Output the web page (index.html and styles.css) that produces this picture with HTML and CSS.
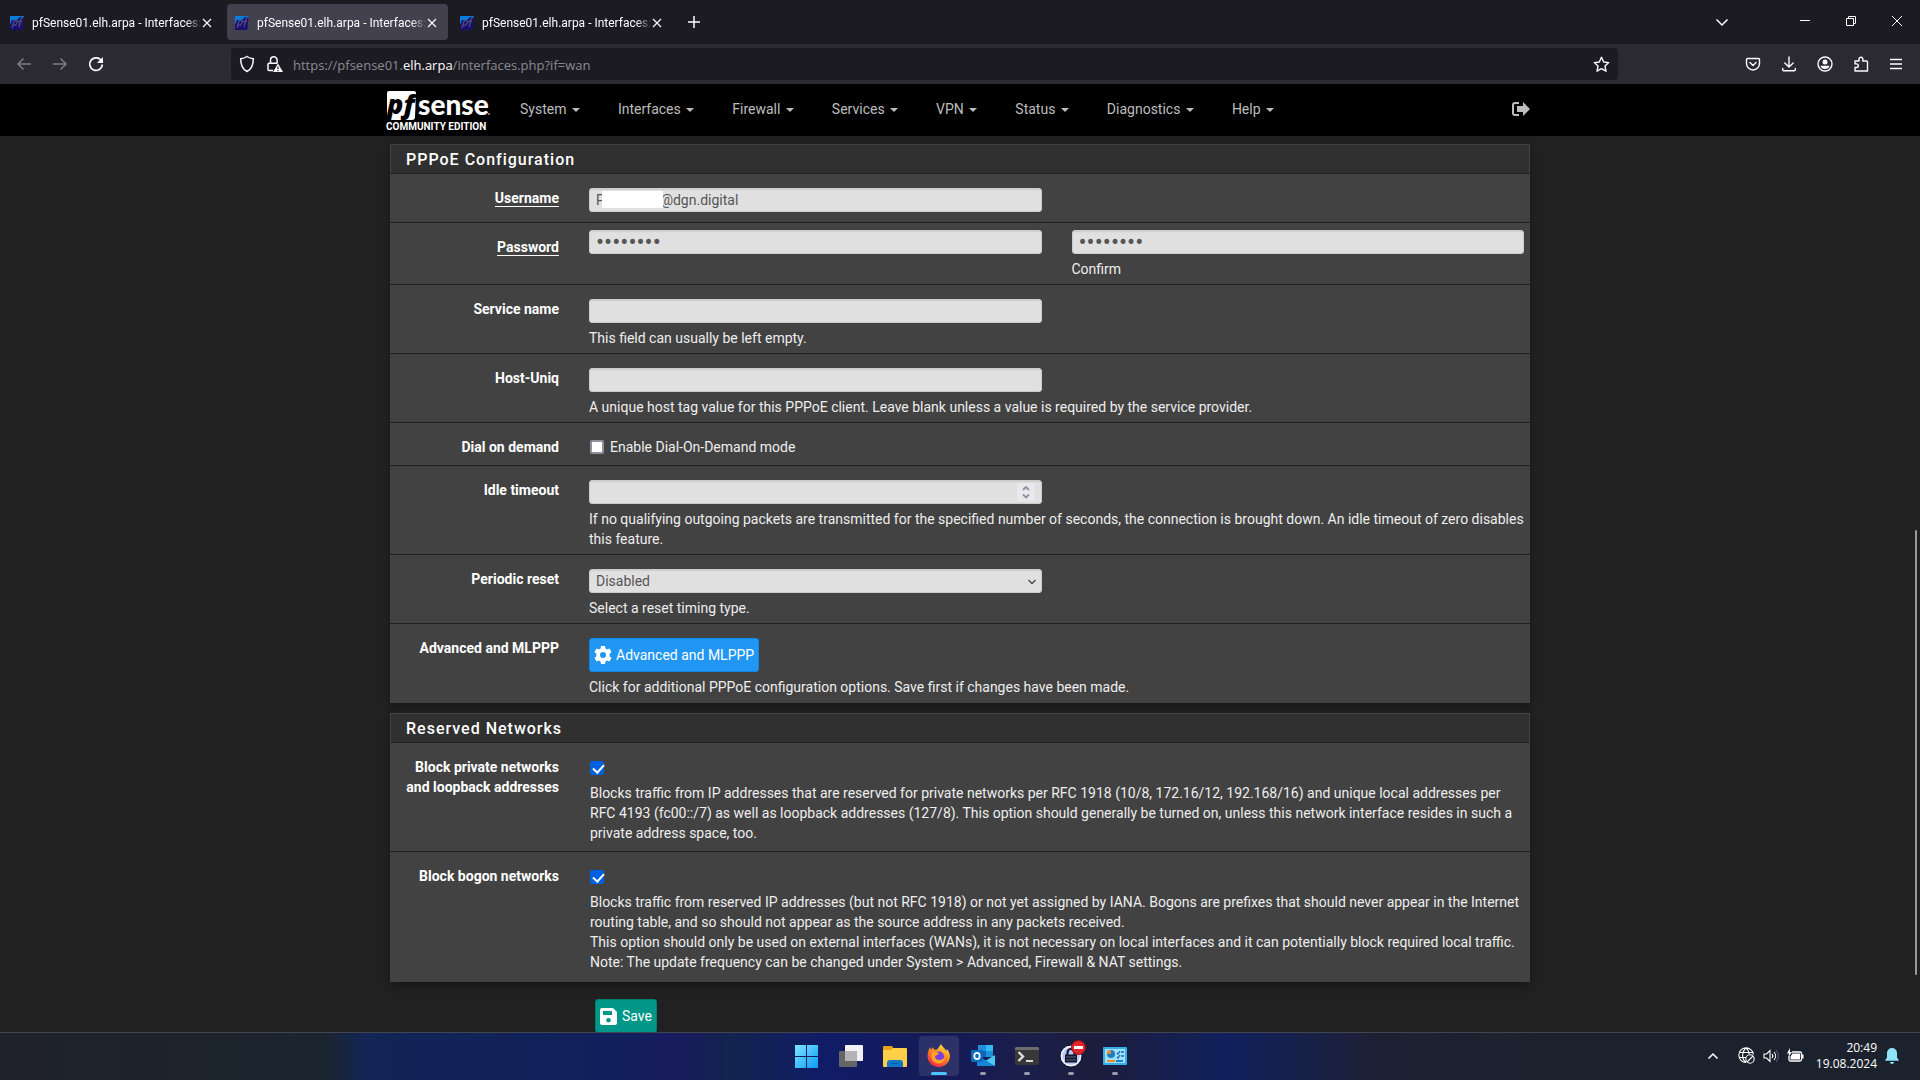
FILE: index.html
```html
<!DOCTYPE html>
<html lang="en">
<head>
    <meta charset="utf-8">
    <title>pfSense01.elh.arpa - Interfaces: WAN</title>
    <link rel="stylesheet" href="styles.css">
</head>
<body>
    <svg class="defs" aria-hidden="true">
        <symbol id="favicon" viewBox="0 0 14 14">
            <path fill="#0a7bd8" d="M0 0h14l-1 3h-3L8 9l-8 1z"/>
            <path fill="#1a0f6e" d="M0 9l2-5h5l3-3h3.500l-1 12-1 1H0z"/>
            <path fill="none" stroke="#4a4a7c" stroke-width="1.400" d="M2 12l2-7c3-1 4 0 3 2s-2 3-4 2M9 11l2-8c.4-1 1-1.500 2-1M8 5.500h4"/>
        </symbol>
        <symbol id="close" viewBox="0 0 10 10"><path fill="none" stroke="currentColor" stroke-width="1.200" d="M1 1l8 8M9 1L1 9"/></symbol>
    </svg>

    <!-- Browser chrome -->
    <div class="tab-bar">
        <div class="tab">
            <svg class="favicon"><use href="#favicon"/></svg>
            <span class="tab-title">pfSense01.elh.arpa - Interfaces: </span>
            <button class="tab-close" aria-label="Close tab"><svg><use href="#close"/></svg></button>
        </div>
        <div class="tab active">
            <svg class="favicon"><use href="#favicon"/></svg>
            <span class="tab-title">pfSense01.elh.arpa - Interfaces: </span>
            <button class="tab-close" aria-label="Close tab"><svg><use href="#close"/></svg></button>
        </div>
        <div class="tab">
            <svg class="favicon"><use href="#favicon"/></svg>
            <span class="tab-title">pfSense01.elh.arpa - Interfaces: </span>
            <button class="tab-close" aria-label="Close tab"><svg><use href="#close"/></svg></button>
        </div>
        <button class="new-tab" aria-label="New tab">
            <svg width="12" height="12" viewBox="0 0 12 12" fill="none" stroke="currentColor" stroke-width="1.500"><path d="M6 0v12M0 6h12"/></svg>
        </button>
        <div class="window-buttons">
            <button class="all-tabs" aria-label="List all tabs"><svg width="14" height="14" viewBox="0 0 14 14" fill="none" stroke="currentColor" stroke-width="1.500"><path d="M1.500 4.500L7 10l5.500-5.500"/></svg></button>
            <button aria-label="Minimize"><svg width="12" height="12" viewBox="0 0 12 12" fill="none" stroke="currentColor"><path d="M1 5.500h10"/></svg></button>
            <button aria-label="Restore"><svg width="12" height="12" viewBox="0 0 12 12" fill="none" stroke="currentColor"><path d="M1.500 3.500h7v7h-7zM3.500 3.500v-2h7v7h-2"/></svg></button>
            <button aria-label="Close"><svg width="12" height="12" viewBox="0 0 12 12" fill="none" stroke="currentColor"><path d="M1 1l10 10M11 1L1 11"/></svg></button>
        </div>
    </div>

    <div class="toolbar">
        <div class="nav-buttons">
            <button class="dim" aria-label="Back"><svg width="16" height="16" viewBox="0 0 16 16" fill="none" stroke="currentColor" stroke-width="1.500"><path d="M15 8H2M7.500 2.500L2 8l5.500 5.500"/></svg></button>
            <button class="dim" aria-label="Forward"><svg width="16" height="16" viewBox="0 0 16 16" fill="none" stroke="currentColor" stroke-width="1.500"><path d="M1 8h13M8.500 2.500L14 8l-5.500 5.500"/></svg></button>
            <button aria-label="Reload"><svg width="16" height="16" viewBox="0 0 16 16" fill="none" stroke="currentColor" stroke-width="1.700"><path d="M13.500 5A6.300 6.300 0 1 0 14.300 8.500"/><path fill="currentColor" stroke="none" d="M15 1v6H9z"/></svg></button>
        </div>
        <div class="url-bar">
            <svg width="16" height="18" viewBox="0 0 16 18" fill="none" stroke="currentColor" stroke-width="1.500"><path d="M8 1.500c2 1.400 4 2 6.300 2.200 0 6-1.300 10.300-6.300 12.800C3 14 1.700 9.700 1.700 3.700 4 3.500 6 2.900 8 1.500z"/></svg>
            <svg width="18" height="18" viewBox="0 0 18 18"><path fill="none" stroke="currentColor" stroke-width="1.500" d="M5.500 8V5a3.300 3.300 0 0 1 6.600 0v3M8 15.500H4a1 1 0 0 1-1-1V9.200a1 1 0 0 1 1-1h8.500"/><path fill="currentColor" d="M13 8.500l5 8.500H8z"/><path stroke="#1c1b22" stroke-width="1.200" d="M13 11.500v2.500M13 15v1.200"/></svg>
            <span class="url">https://pfsense01.<b>elh.arpa</b>/interfaces.php?if=wan</span>
            <svg width="17" height="17" viewBox="0 0 17 17" fill="none" stroke="currentColor" stroke-width="1.400" stroke-linejoin="round"><path d="M8.500 1.300l2.200 4.700 5 .6-3.700 3.500 1 5.100-4.500-2.500L4 15.200l1-5.100L1.300 6.600l5-.6z"/></svg>
        </div>
        <div class="toolbar-icons">
            <button aria-label="Pocket"><svg width="16" height="16" viewBox="0 0 16 16" fill="none" stroke="currentColor" stroke-width="1.400" stroke-linejoin="round" stroke-linecap="round"><path d="M2.500 2.500h11a1 1 0 0 1 1 1V7.500a6.500 6.500 0 0 1-13 0V3.500a1 1 0 0 1 1-1zM5 6.500l3 3 3-3"/></svg></button>
            <button aria-label="Downloads"><svg width="16" height="16" viewBox="0 0 16 16" fill="none" stroke="currentColor" stroke-width="1.400" stroke-linecap="round"><path d="M8 1v10M3.800 7L8 11l4.200-4M1.700 12.500v1a1.300 1.300 0 0 0 1.300 1.300h10a1.300 1.300 0 0 0 1.300-1.300v-1"/></svg></button>
            <button aria-label="Account"><svg width="16" height="16" viewBox="0 0 16 16"><circle cx="8" cy="8" r="7" fill="none" stroke="currentColor" stroke-width="1.400"/><circle cx="8" cy="6" r="2.500" fill="currentColor"/><path fill="currentColor" d="M3.500 9.700h9C12 12 10.500 13 8 13s-4-1-4.500-3.300z"/></svg></button>
            <button aria-label="Extensions"><svg width="16" height="16" viewBox="0 0 16 16" fill="none" stroke="currentColor" stroke-width="1.400" stroke-linejoin="round"><path d="M2 15V11.500h1.500a1.800 1.800 0 0 0 0-3.600H2V5h4V3.200a1.900 1.900 0 0 1 3.800 0V5h3.700a1 1 0 0 1 1 1v9z"/></svg></button>
            <button aria-label="Menu"><svg width="14" height="16" viewBox="0 0 14 16" fill="none" stroke="currentColor" stroke-width="1.400"><path d="M1 3.500h12M1 8h12M1 12.500h12"/></svg></button>
        </div>
    </div>

    <!-- Page -->
    <div class="page">
        <header class="navbar">
            <div class="container navbar-inner">
                <a class="brand" href="#">
                    <svg width="106" height="43" viewBox="0 0 106 43">
                        <path fill="#fff" d="M2 2a2 2 0 0 1 2-2h25q2 0 2 2l-1 24q0 3-3 3H2z"/>
                        <text class="logo-pf" x="2" y="23">pf</text>
                        <text class="logo-sense" x="33" y="24">sense</text>
                        <text class="logo-edition" x="1" y="39">COMMUNITY EDITION</text>
                        <circle cx="104" cy="23" r="1" fill="#999"/>
                    </svg>
                </a>
                <nav class="menu">
                    <a href="#">System <i class="caret"></i></a>
                    <a href="#">Interfaces <i class="caret"></i></a>
                    <a href="#">Firewall <i class="caret"></i></a>
                    <a href="#">Services <i class="caret"></i></a>
                    <a href="#">VPN <i class="caret"></i></a>
                    <a href="#">Status <i class="caret"></i></a>
                    <a href="#">Diagnostics <i class="caret"></i></a>
                    <a href="#">Help <i class="caret"></i></a>
                </nav>
                <a class="logout" href="#" aria-label="Logout">
                    <svg width="18" height="14" viewBox="0 0 18 14"><path fill="none" stroke="currentColor" stroke-width="2" d="M7 1H3a2 2 0 0 0-2 2v8a2 2 0 0 0 2 2h4"/><path fill="currentColor" d="M5 4h6V0l7 7-7 7v-4H5z"/></svg>
                </a>
            </div>
        </header>

        <form class="container content">
            <section class="panel">
                <h2>PPPoE Configuration</h2>
                <div class="row">
                    <label class="name" for="username"><span class="required">Username</span></label>
                    <div class="field short">
                        <div class="control half">
                            <input type="text" id="username" value="P                @dgn.digital">
                            <span class="redacted"></span>
                        </div>
                    </div>
                </div>
                <div class="row tight">
                    <label class="name" for="password"><span class="required">Password</span></label>
                    <div class="field pair">
                        <input type="password" id="password" value="password">
                        <div>
                            <input type="password" id="confirm" value="password">
                            <label class="help" for="confirm">Confirm</label>
                        </div>
                    </div>
                </div>
                <div class="row">
                    <label class="name" for="service">Service name</label>
                    <div class="field">
                        <input class="half" type="text" id="service">
                        <p class="help">This field can usually be left empty.</p>
                    </div>
                </div>
                <div class="row">
                    <label class="name" for="hostuniq">Host-Uniq</label>
                    <div class="field">
                        <input class="half" type="text" id="hostuniq">
                        <p class="help">A unique host tag value for this PPPoE client. Leave blank unless a value is required by the service provider.</p>
                    </div>
                </div>
                <div class="row">
                    <span class="name">Dial on demand</span>
                    <div class="field">
                        <label class="check"><input type="checkbox"> Enable Dial-On-Demand mode</label>
                    </div>
                </div>
                <div class="row">
                    <label class="name" for="idle">Idle timeout</label>
                    <div class="field">
                        <div class="control half">
                            <input type="number" id="idle">
                            <svg class="spinner" width="18" height="18" viewBox="0 0 18 18" fill="none" stroke="#8f8f9d" stroke-width="1.800"><path d="M6 7l3-3 3 3M6 11.500l3 3 3-3"/></svg>
                        </div>
                        <p class="help">If no qualifying outgoing packets are transmitted for the specified number of seconds, the connection is brought down. An idle timeout of zero disables this feature.</p>
                    </div>
                </div>
                <div class="row">
                    <label class="name" for="reset">Periodic reset</label>
                    <div class="field">
                        <div class="control half">
                            <select id="reset">
                                <option>Disabled</option>
                                <option>Custom</option>
                                <option>Pre-set</option>
                            </select>
                            <svg class="arrow" width="10" height="8" viewBox="0 0 10 8" fill="none" stroke="#444" stroke-width="1.300"><path d="M1.500 2L5 5.500 8.500 2"/></svg>
                        </div>
                        <p class="help">Select a reset timing type.</p>
                    </div>
                </div>
                <div class="row">
                    <span class="name">Advanced and MLPPP</span>
                    <div class="field">
                        <button type="button" class="btn btn-info">
                            <svg width="18" height="18" viewBox="0 0 18 18"><path fill="currentColor" fill-rule="evenodd" d="M7 0h4l.5 2.500 1.600.9L15.500 2.600l2 3.500-1.900 1.700v2.400l1.900 1.700-2 3.500-2.400-.8-1.600.9L11 18H7l-.5-2.500-1.600-.9-2.400.8-2-3.500 1.900-1.700V7.800L.5 6.100l2-3.500 2.400.8 1.600-.9zM9 6a3 3 0 1 0 0 6 3 3 0 0 0 0-6z"/></svg>
                            Advanced and MLPPP
                        </button>
                        <p class="help">Click for additional PPPoE configuration options. Save first if changes have been made.</p>
                    </div>
                </div>
            </section>

            <section class="panel">
                <h2>Reserved Networks</h2>
                <div class="row check-row">
                    <label class="name" for="blockpriv">Block private networks and loopback addresses</label>
                    <div class="field">
                        <input type="checkbox" id="blockpriv" checked>
                        <p>Blocks traffic from IP addresses that are reserved for private networks per RFC 1918 (10/8, 172.16/12, 192.168/16) and unique local addresses per RFC 4193 (fc00::/7) as well as loopback addresses (127/8). This option should generally be turned on, unless this network interface resides in such a private address space, too.</p>
                    </div>
                </div>
                <div class="row check-row">
                    <label class="name" for="blockbogons">Block bogon networks</label>
                    <div class="field">
                        <input type="checkbox" id="blockbogons" checked>
                        <p>Blocks traffic from reserved IP addresses (but not RFC 1918) or not yet assigned by IANA. Bogons are prefixes that should never appear in the Internet routing table, and so should not appear as the source address in any packets received.<br>
                        This option should only be used on external interfaces (WANs), it is not necessary on local interfaces and it can potentially block required local traffic.<br>
                        Note: The update frequency can be changed under System &gt; Advanced, Firewall &amp; NAT settings.</p>
                    </div>
                </div>
            </section>

            <div class="actions">
                <button type="submit" class="btn btn-save">
                    <svg width="18" height="17" viewBox="0 0 18 17"><path fill="currentColor" fill-rule="evenodd" d="M2 0h11l4 4v11a2 2 0 0 1-2 2H2a2 2 0 0 1-2-2V2a2 2 0 0 1 2-2zM3 3v4h9V3zM8.500 10a2.300 2.300 0 1 0 0 4.600 2.300 2.300 0 0 0 0-4.600z"/></svg>
                    Save
                </button>
            </div>
        </form>
        <div class="scroll-thumb"></div>
    </div>

    <!-- Taskbar -->
    <footer class="taskbar">
        <div class="apps">
            <button class="app" aria-label="Start">
                <svg width="24" height="24" viewBox="0 0 24 24">
                    <defs><linearGradient id="win" x1="0" y1="0" x2="1" y2="1"><stop offset="0" stop-color="#7fe6ff"/><stop offset="1" stop-color="#0a9bf5"/></linearGradient></defs>
                    <path fill="url(#win)" d="M0 1h11v11H0zM12 1h11v11H12zM0 13h11v11H0zM12 13h11v11H12z"/>
                </svg>
            </button>
            <button class="app" aria-label="Task view">
                <svg width="24" height="24" viewBox="0 0 24 24"><rect x="6" y="1" width="18" height="16" rx="1" fill="#f2f2f4"/><rect y="7" width="18" height="16" rx="1" fill="#666"/><path fill="#b4b4b6" d="M6 7h12v10H6z"/></svg>
            </button>
            <button class="app" aria-label="File Explorer">
                <svg width="24" height="24" viewBox="0 0 24 24"><path fill="#e8a013" d="M0 3a1 1 0 0 1 1-1h8l2 3h-2v4H0z"/><path fill="#ffcf48" d="M0 6h8l2-2h13a1 1 0 0 1 1 1v17a1 1 0 0 1-1 1H1a1 1 0 0 1-1-1z"/><path fill="#1276c8" d="M4 23v-4a3 3 0 0 1 3-3h10a3 3 0 0 1 3 3v4z"/><path stroke="#0a5a9e" d="M8 19.500h8"/></svg>
            </button>
            <button class="app current" aria-label="Firefox">
                <svg width="24" height="24" viewBox="0 0 24 24">
                    <defs><linearGradient id="fox" x1=".8" y1="0" x2=".3" y2="1"><stop offset="0" stop-color="#fff04a"/><stop offset=".45" stop-color="#ff8a1e"/><stop offset="1" stop-color="#f5224e"/></linearGradient></defs>
                    <path fill="url(#fox)" d="M3 3c0 1 .5 2 1.500 2.500L6 3c0 1.500 1 2.500 3 3 2-1 3-3 5-6 1 3 4 4 5 7l1-2c2 2.500 3 5 3 8a11.300 11.300 0 0 1-22.500 0C.5 9 1.500 6 3 3z"/>
                    <circle cx="12" cy="12.500" r="5" fill="#7a3fe0"/>
                    <path fill="#ffa326" d="M5 8c3-1 5 0 7 1.500-1 1.500-3 1.500-4 3 0 2 2 4 5 3.500 2 0 3-1.500 5-2-1 4-4 6-7 5.500-5 0-8-5-6-11.500z"/>
                </svg>
            </button>
            <button class="app running" aria-label="Outlook">
                <svg width="24" height="24" viewBox="0 0 24 24"><path fill="#1066b8" d="M7 1h15v12H7z"/><path fill="#35b8f1" d="M15 1h7v6h-7z"/><path fill="#1e8fdb" d="M7 7h8V1H7zM15 7h7v6h-7z"/><path fill="#4cc8f5" d="M6 22L24 11v10a1 1 0 0 1-1 1z"/><path fill="#1687d4" d="M6 11l18 11H6z"/><rect y="6" width="12" height="12" rx="1" fill="#0a6ac4"/><ellipse cx="6" cy="12" rx="2.700" ry="3.200" fill="none" stroke="#fff" stroke-width="1.800"/></svg>
            </button>
            <button class="app running" aria-label="Terminal">
                <svg width="24" height="24" viewBox="0 0 24 24"><rect y="3" width="24" height="18" rx="1.500" fill="#383838"/><path fill="#6d6d6d" d="M1.500 3h21A1.500 1.500 0 0 1 24 4.500V6H0V4.500A1.500 1.500 0 0 1 1.500 3z"/><path fill="none" stroke="#ddd" stroke-width="2.400" d="M3.500 8l4.500 4.500L3.500 17"/><path stroke="#eee" stroke-width="1.800" d="M11 17h7"/></svg>
            </button>
            <button class="app running" aria-label="KeePass, 1 alert">
                <svg width="24" height="24" viewBox="0 0 24 24"><circle cx="12" cy="12" r="11" fill="#b5c8f5" stroke="#0b0b18"/><circle cx="12" cy="12" r="9.500" fill="none" stroke="#eef3ff" stroke-width="1.500"/><path fill="none" stroke="#15172c" stroke-width="2.200" d="M8.500 11V8.500a3.500 3.500 0 0 1 7 0V11"/><path fill="#15172c" d="M6 10.500h12v8H6z"/><path stroke="#596282" d="M7 13h10M7 16h10"/></svg>
                <svg class="badge" width="15" height="15" viewBox="0 0 15 15"><circle cx="7.500" cy="7.500" r="7" fill="#e0252b" stroke="#8e1014"/><path fill="#fff" d="M3 6h9v3H3z"/></svg>
            </button>
            <button class="app running" aria-label="Control Panel">
                <svg width="24" height="24" viewBox="0 0 24 24"><rect y="3" width="24" height="18" rx="1" fill="#37aee8"/><path fill="#9fe0fa" d="M2 5h20v14H2z"/><circle cx="8" cy="10" r="4" fill="#1f7ec9"/><path fill="#f28b22" d="M8 10V6a4 4 0 0 0-4 4z"/><path fill="none" stroke="#1768ad" stroke-width="1.300" d="M14 9l1 1 2-3M14 13l1 1 2-3M18 8h3M18 12h3"/><path stroke="#f28b22" stroke-width="2" d="M4 17h8"/><path stroke="#1f7ec9" stroke-width="2" d="M13 17h7"/></svg>
            </button>
        </div>
        <div class="tray">
            <svg width="12" height="12" viewBox="0 0 12 12" fill="none" stroke="currentColor" stroke-width="1.500"><path d="M1.500 8.500L6 4l4.500 4.500"/></svg>
            <svg class="globe" width="17" height="17" viewBox="0 0 17 17" fill="none" stroke="currentColor" stroke-width="1.100"><path d="M8 15.500a7.300 7.300 0 1 1 7.400-8M1.500 5.500h13M1.500 10.500H8M8 1C3.500 5 3.500 12 8 15.500M8 1c2 1.500 3 4 3.200 6"/><circle cx="12" cy="12" r="4.200"/><path d="M9 15l6-6"/></svg>
            <svg width="16" height="16" viewBox="0 0 16 16" fill="none" stroke="currentColor" stroke-width="1.100"><path d="M1 6h2.500L7 2.500v11L3.500 10H1z"/><path d="M9 6a3 3 0 0 1 0 4M11 4a6 6 0 0 1 0 8"/><path stroke="#59616f" d="M13 2a9 9 0 0 1 0 12"/></svg>
            <svg width="17" height="16" viewBox="0 0 17 16"><path fill="none" stroke="currentColor" stroke-width="1.300" d="M5 4h8a1.500 1.500 0 0 1 1.500 1.500v6A1.500 1.500 0 0 1 13 13H3.500A1.500 1.500 0 0 1 2 11.500V8"/><path fill="currentColor" d="M5.500 5.500H13v6H3.500V8.500zM15 6.500h1.500v4H15zM3 0L0 5.500h2L1.500 9 5 4H3z"/></svg>
            <div class="clock"><div>20:49</div><div>19.08.2024</div></div>
            <svg width="14" height="16" viewBox="0 0 14 16"><path fill="#8fe3fb" d="M7 0a5 5 0 0 1 5 5v4.500l1.700 2.500v.8H.3V12L2 9.500V5a5 5 0 0 1 5-5zM5 14h4a2 2 0 0 1-4 0z"/></svg>
        </div>
    </footer>
</body>
</html>
```
FILE: styles.css
```css
* {
    box-sizing: border-box;
}
body {
    margin: 0;
    height: 100vh;
    display: flex;
    flex-direction: column;
    overflow: hidden;
    background-color: #212121;
    color: #eee;
    font-family: Roboto, sans-serif;
    font-size: 14px;
    line-height: 20px;
}
button {
    font: inherit;
    color: inherit;
    background: none;
    border: none;
    padding: 0;
    cursor: pointer;
}
svg {
    display: block;
    flex: none;
    overflow: visible;
}
.defs {
    position: absolute;
    width: 0;
    height: 0;
}

/* Browser chrome */
.tab-bar {
    flex: none;
    display: flex;
    align-items: center;
    gap: 4px;
    height: 44px;
    padding-left: 2px;
    background-color: #1c1b22;
    color: #fbfbfe;
    font-size: 12px;
}
.tab {
    display: flex;
    align-items: center;
    width: 221px;
    height: 36px;
    padding: 1px 11px 0 8px;
    border-radius: 4px;
}
.tab.active {
    background-color: #42414d;
}
.favicon {
    width: 14px;
    height: 14px;
    margin-right: 8px;
}
.tab-title {
    flex: 1;
    white-space: nowrap;
    -webkit-mask-image: linear-gradient(to left, transparent, #000 16px);
    mask-image: linear-gradient(to left, transparent, #000 16px);
}
.tab-close svg {
    width: 10px;
    height: 10px;
}
.new-tab {
    margin-left: 11px;
}
.window-buttons {
    display: flex;
    margin-left: auto;
}
.window-buttons button {
    display: flex;
    justify-content: center;
    width: 46px;
}
.window-buttons .all-tabs {
    margin-right: 37px;
}
.toolbar {
    flex: none;
    display: flex;
    align-items: center;
    height: 40px;
    background-color: #2b2a33;
    color: #fbfbfe;
}
.nav-buttons {
    display: flex;
    gap: 20px;
    width: 231px;
    padding-left: 16px;
}
.nav-buttons .dim {
    color: #7d7c85;
}
.url-bar {
    flex: 1;
    display: flex;
    align-items: center;
    gap: 10px;
    height: 32px;
    padding: 0 8px;
    border-radius: 4px;
    background-color: #1c1b22;
}
.url {
    flex: 1;
    padding-top: 2px;
    color: #8b8a92;
    font-family: "Open Sans", sans-serif;
    font-size: 13px;
}
.url b {
    font-weight: normal;
    color: #fbfbfe;
}
.toolbar-icons {
    display: flex;
    gap: 20px;
    padding: 0 17px 0 127px;
}

/* pfSense page */
.page {
    position: relative;
    flex: 1;
    min-height: 0;
    overflow: hidden;
}
.container {
    width: 1140px;
    max-width: 100%;
    margin: 0 auto;
}
.navbar {
    background-color: #000;
}
.navbar-inner {
    display: flex;
    align-items: center;
    height: 52px;
    padding-bottom: 2px;
}
.brand {
    margin: 7px 0 0 -5px;
}
.logo-pf {
    font: italic 800 27px "Open Sans", sans-serif;
}
.logo-sense {
    font: 900 28px Lato, sans-serif;
    fill: #fff;
}
.logo-edition {
    font: 700 10px Roboto, sans-serif;
    fill: #fff;
}
.menu {
    display: flex;
    flex: 1;
    gap: 38px;
    margin-left: 29px;
}
.menu a {
    color: #bdbdbd;
    text-decoration: none;
}
.caret {
    display: inline-block;
    margin-left: 2px;
    vertical-align: middle;
    border-top: 4px solid;
    border-left: 4px solid transparent;
    border-right: 4px solid transparent;
}
.logout {
    color: #bdbdbd;
}
.content {
    padding-top: 8px;
}
.panel {
    margin-bottom: 10px;
    background-color: #424242;
    box-shadow: 0 4px 8px rgba(0,0,0,0.3);
}
.panel h2 {
    margin: 0;
    padding: 5px 15px 3px;
    border: 1px solid #424242;
    border-bottom-color: #212121;
    background-color: #303030;
    color: #fff;
    font-size: 16px;
    font-weight: 500;
    line-height: 20px;
    letter-spacing: 1px;
}
.row {
    display: grid;
    grid-template-columns: 169px 1fr;
    column-gap: 30px;
    padding: 14px 6px 5px 0;
    border-bottom: 1px solid #212121;
}
.row:last-child {
    padding-bottom: 6px;
    border-bottom: none;
}
.name {
    color: #fff;
    font-weight: bold;
    text-align: right;
}
.required {
    border-bottom: 1px solid #fff;
}
.short {
    padding-bottom: 5px;
}
.tight {
    padding-top: 7px;
}
.tight .name {
    padding-top: 7px;
}
.pair {
    display: grid;
    grid-template-columns: 1fr 1fr;
    gap: 30px;
}
.half {
    width: calc(50% - 15px);
}
.control {
    position: relative;
}
input[type="text"],
input[type="password"],
input[type="number"],
select {
    display: block;
    height: 24px;
    padding: 0 6px;
    border: 1px solid #ccc;
    border-radius: 3px;
    background-color: #e0e0e0;
    box-shadow: inset 0 1px 1px rgba(0,0,0,0.08);
    color: #555;
    font: inherit;
    appearance: none;
}
input[type="password"] {
    font-size: 24px;
}
input:not(.half):not([type="checkbox"]),
select {
    width: 100%;
}
input[type="number"]::-webkit-inner-spin-button {
    display: none;
}
.redacted {
    position: absolute;
    top: 3px;
    left: 13px;
    width: 61px;
    height: 17px;
    background-color: #fff;
}
.spinner {
    position: absolute;
    top: 3px;
    right: 7px;
    background-color: #e9e9ed;
}
.arrow {
    position: absolute;
    top: 9px;
    right: 5px;
    pointer-events: none;
}
.help {
    display: block;
    margin: 5px 0 0;
}
input[type="checkbox"] {
    display: block;
    width: 14px;
    height: 14px;
    margin: 0;
    border: 2px solid #8f8f9d;
    border-radius: 2px;
    background-color: #fff;
    appearance: none;
}
input[type="checkbox"]:checked {
    border-color: #0060df;
    background-color: #0060df;
}
input[type="checkbox"]:checked::after {
    content: "";
    display: block;
    width: 5px;
    height: 9px;
    margin: -1px 0 0 3px;
    border: solid #fff;
    border-width: 0 2px 2px 0;
    transform: rotate(42deg);
}
.check {
    display: flex;
    align-items: center;
    gap: 6px;
    padding: 0 1px 3px;
}
.check-row {
    padding-bottom: 8px;
}
.check-row:last-child {
    padding-bottom: 10px;
}
.check-row .field {
    padding: 4px 0 0 1px;
}
.check-row p {
    margin: 8px 0 0;
}
.btn {
    display: flex;
    align-items: center;
    gap: 4px;
    height: 34px;
    padding: 0 4px;
    border: 1px solid;
    border-radius: 3px;
    color: #fff;
}
.btn-info {
    background-color: #2196f3;
    border-color: #0d87e9;
}
.btn-save {
    background-color: #009688;
    border-color: #008073;
}
.actions {
    padding: 7px 0 0 205px;
}
.scroll-thumb {
    position: absolute;
    top: 47%;
    right: 3px;
    width: 2px;
    height: 47%;
    border-radius: 1px;
    background-color: #9a9a9a;
}

/* Taskbar */
.taskbar {
    position: relative;
    flex: none;
    display: flex;
    justify-content: center;
    height: 48px;
    padding: 0 0 2px 2px;
    border-top: 1px solid #42444f;
    background: linear-gradient(to right, #1f222b, #1b2530 17%, #122555 19%, #11205c 32%, #191a5e 35%, #12244f 38%, #101c66 43%, #161a55 50%, #1a1f48 54%, #1c1d3c 57%, #10205c 64%, #1d2033 72%, #1b222e 80%, #1b222e);
    color: #fff;
}
.apps {
    display: flex;
    align-items: center;
    gap: 4px;
}
.app {
    position: relative;
    display: flex;
    align-items: center;
    justify-content: center;
    width: 40px;
    height: 40px;
    border-radius: 4px;
}
.current {
    background-color: rgba(255,255,255,0.1);
}
.current::after,
.running::after {
    content: "";
    position: absolute;
    bottom: 1px;
    width: 6px;
    height: 3px;
    border-radius: 2px;
    background-color: #9a9cac;
}
.current::after {
    width: 16px;
    background-color: #4cc2ff;
}
.badge {
    position: absolute;
    top: 4px;
    right: 5px;
}
.tray {
    position: absolute;
    top: 0;
    right: 21px;
    bottom: 2px;
    display: flex;
    align-items: center;
    gap: 8px;
}
.globe {
    margin-left: 11px;
}
.clock {
    width: 65px;
    font-family: "Open Sans", sans-serif;
    font-size: 12px;
    line-height: 16px;
    text-align: right;
}
```
